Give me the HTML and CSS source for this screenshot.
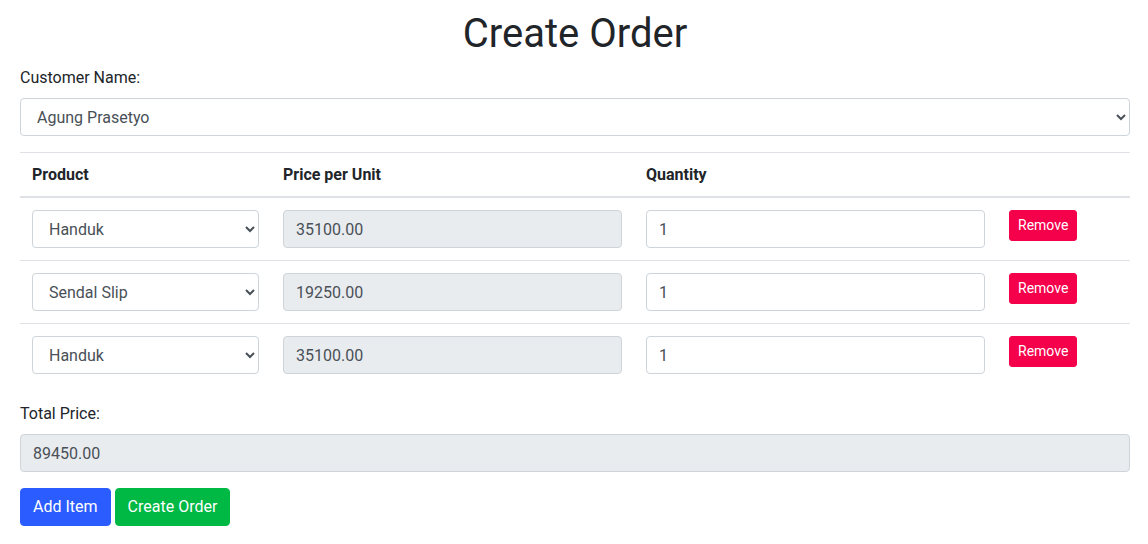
FILE: index.html
```html
<!DOCTYPE html>
<html lang="en">
<head>
<meta charset="utf-8">
<title>Create Order</title>
<link rel="stylesheet" href="styles.css">
</head>
<body>
<div class="container">
  <h1 class="title">Create Order</h1>
  <div class="form-group">
    <label class="label" for="customer">Customer Name:</label>
    <select id="customer" class="control">
      <option>Agung Prasetyo</option>
    </select>
  </div>
  <table class="items">
    <thead>
      <tr>
        <th class="col-product">Product</th>
        <th class="col-price">Price per Unit</th>
        <th class="col-qty">Quantity</th>
        <th class="col-action"></th>
      </tr>
    </thead>
    <tbody>
      <tr>
        <td><select class="control"><option>Handuk</option></select></td>
        <td><input class="control readonly" type="text" value="35100.00" readonly></td>
        <td><input class="control" type="number" value="1"></td>
        <td><button class="btn btn-sm btn-danger" type="button">Remove</button></td>
      </tr>
      <tr>
        <td><select class="control"><option>Sendal Slip</option></select></td>
        <td><input class="control readonly" type="text" value="19250.00" readonly></td>
        <td><input class="control" type="number" value="1"></td>
        <td><button class="btn btn-sm btn-danger" type="button">Remove</button></td>
      </tr>
      <tr>
        <td><select class="control"><option>Handuk</option></select></td>
        <td><input class="control readonly" type="text" value="35100.00" readonly></td>
        <td><input class="control" type="number" value="1"></td>
        <td><button class="btn btn-sm btn-danger" type="button">Remove</button></td>
      </tr>
    </tbody>
  </table>
  <div class="form-group">
    <label class="label" for="total">Total Price:</label>
    <input id="total" class="control readonly" type="text" value="89450.00" readonly>
  </div>
  <div class="actions">
    <button class="btn btn-primary" type="button">Add Item</button>
    <button class="btn btn-success" type="button">Create Order</button>
  </div>
</div>
</body>
</html>
```

FILE: styles.css
```css
* {
  box-sizing: border-box;
}

html, body {
  margin: 0;
  padding: 0;
  background: #ffffff;
}

body {
  font-family: Roboto, "Liberation Sans", Arial, sans-serif;
  font-size: 16px;
  line-height: 1.5;
  color: #212529;
}

.container {
  padding: 10px 18px 0 20px;
}

.title {
  margin: 0 0 8px 0;
  font-size: 40px;
  font-weight: 400;
  line-height: 1.2;
  text-align: center;
}

.form-group {
  margin-bottom: 16px;
}

.label {
  display: inline-block;
  margin-bottom: 8px;
}

.control {
  display: block;
  width: 100%;
  height: 38px;
  padding: 6px 12px;
  font-family: inherit;
  font-size: 16px;
  line-height: 1.5;
  color: #495057;
  background-color: #ffffff;
  border: 1px solid #ced4da;
  border-radius: 4px;
  margin: 0;
}

select.control {
  padding: 6px 8px 6px 12px;
}

input[type=number].control::-webkit-inner-spin-button,
input[type=number].control::-webkit-outer-spin-button {
  -webkit-appearance: none;
  margin: 0;
}

.control.readonly {
  background-color: #e9ecef;
}

.items {
  width: 100%;
  border-collapse: collapse;
  margin-bottom: 16px;
}

.items th {
  text-align: left;
  font-weight: 700;
  padding: 10px 12px 9px 12px;
  border-top: 1px solid #dee2e6;
  border-bottom: 2px solid #dee2e6;
  vertical-align: bottom;
}

.items td {
  padding: 12px;
  vertical-align: top;
  border-top: 1px solid #dee2e6;
}

.items tbody tr:first-child td {
  border-top: none;
  padding-top: 12px;
}

.col-product { width: 251px; }
.col-price { width: 363px; }
.col-qty { width: 363px; }

.btn {
  display: inline-block;
  font-family: inherit;
  font-size: 16px;
  line-height: 1.5;
  font-weight: 400;
  color: #ffffff;
  padding: 6px 12px;
  border: 1px solid transparent;
  border-radius: 4px;
  cursor: pointer;
  margin: 0;
}

.btn-sm {
  font-size: 14px;
  padding: 4px 8px;
  border-radius: 3px;
}

.btn-danger {
  background-color: #f5004b;
  border-color: #f5004b;
}

.btn-primary {
  background-color: #2b5cff;
  border-color: #2b5cff;
}

.btn-success {
  background-color: #00b844;
  border-color: #00b844;
}

.actions {
  display: flex;
  gap: 4px;
}
```
